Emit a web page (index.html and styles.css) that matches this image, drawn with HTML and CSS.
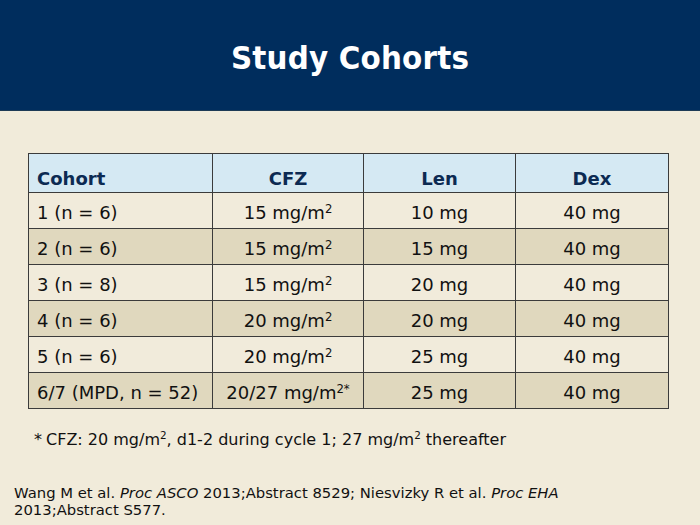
FILE: index.html
```html
<!DOCTYPE html>
<html>
<head>
<meta charset="utf-8">
<link rel="stylesheet" href="styles.css">
</head>
<body>
<header class="banner">
  <h1 class="title">Study Cohorts</h1>
</header>
<main class="content">
  <table class="cohorts">
    <colgroup>
      <col class="c1"><col class="c2"><col class="c3"><col class="c4">
    </colgroup>
    <thead>
      <tr>
        <th class="first">Cohort</th>
        <th>CFZ</th>
        <th>Len</th>
        <th>Dex</th>
      </tr>
    </thead>
    <tbody>
      <tr class="light"><td class="first">1 (n = 6)</td><td>15 mg/m<sup>2</sup></td><td>10 mg</td><td>40 mg</td></tr>
      <tr class="dark"><td class="first">2 (n = 6)</td><td>15 mg/m<sup>2</sup></td><td>15 mg</td><td>40 mg</td></tr>
      <tr class="light"><td class="first">3 (n = 8)</td><td>15 mg/m<sup>2</sup></td><td>20 mg</td><td>40 mg</td></tr>
      <tr class="dark"><td class="first">4 (n = 6)</td><td>20 mg/m<sup>2</sup></td><td>20 mg</td><td>40 mg</td></tr>
      <tr class="light"><td class="first">5 (n = 6)</td><td>20 mg/m<sup>2</sup></td><td>25 mg</td><td>40 mg</td></tr>
      <tr class="dark"><td class="first">6/7 (MPD, n = 52)</td><td>20/27 mg/m<sup>2*</sup></td><td>25 mg</td><td>40 mg</td></tr>
    </tbody>
  </table>
  <p class="footnote"><span class="star">*</span>CFZ: 20 mg/m<sup>2</sup>, d1-2 during cycle 1; 27 mg/m<sup>2</sup> thereafter</p>
  <p class="citation">Wang M et al. <em>Proc ASCO</em> 2013;Abstract 8529; Niesvizky R et al. <em>Proc EHA</em><br>2013;Abstract S577.</p>
</main>
</body>
</html>
```
FILE: styles.css
```css
html, body {
  margin: 0;
  padding: 0;
}
body {
  width: 700px;
  height: 525px;
  overflow: hidden;
  background: #f1ebda;
  font-family: "DejaVu Sans", Verdana, sans-serif;
  color: #111;
}
.banner {
  height: 110px;
  background: #002d5d;
  border-bottom: 1px solid #1d3a55;
  display: flex;
  align-items: center;
  justify-content: center;
}
.title {
  margin: 5px 0 0 0;
  color: #fff;
  font-family: "DejaVu Sans Condensed", "DejaVu Sans", sans-serif;
  font-stretch: condensed;
  font-weight: bold;
  font-size: 32.7px;
  letter-spacing: 0.2px;
}
.content {
  padding: 42px 0 0 28px;
}
.cohorts {
  border-collapse: collapse;
  width: 640px;
  table-layout: fixed;
  font-size: 18px;
}
.c1 { width: 184px; }
.c2 { width: 151px; }
.c3 { width: 152px; }
.c4 { width: 153px; }
.cohorts th, .cohorts td {
  box-sizing: border-box;
  border: 1px solid #3b3b3b;
  text-align: center;
  padding: 0 8px;
  white-space: nowrap;
}
.cohorts th {
  background: #d5e9f3;
  color: #0c2a52;
  font-weight: bold;
  height: 39px;
  padding-top: 11px;
  vertical-align: middle;
}
.cohorts td {
  height: 36px;
  padding-top: 3px;
}
.cohorts .first {
  text-align: left;
}
.light td { background: #f1ebdb; }
.dark td { background: #e0d8be; }
sup {
  font-size: 0.65em;
  line-height: 0;
  vertical-align: 0.55em;
}
.footnote {
  margin: 21px 0 0 6px;
  font-size: 16px;
}
.star {
  margin-right: 4px;
}
.citation {
  margin: 35px 0 0 -14px;
  font-size: 14.8px;
  line-height: 17px;
}
```
